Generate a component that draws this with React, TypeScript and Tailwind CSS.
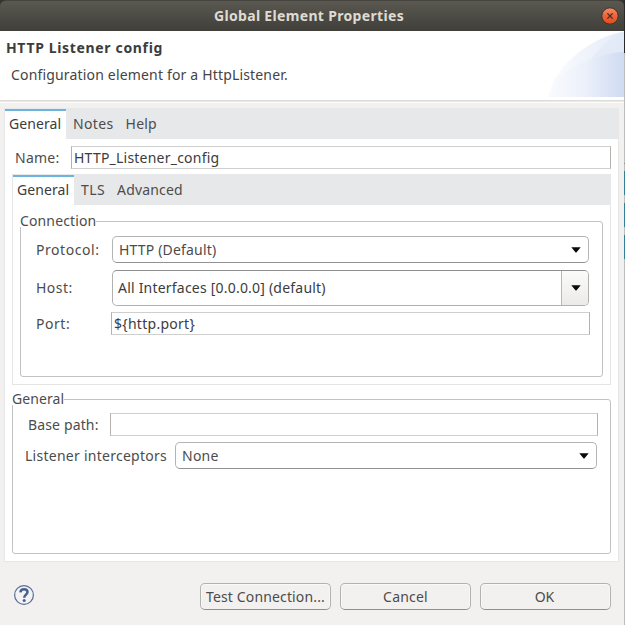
import type { ReactNode } from "react";

const Arrow = ({ className = "" }: { className?: string }) => (
  <svg width="10" height="6" viewBox="0 0 10 6" className={`shrink-0 ${className}`}>
    <path d="M0.3 0.3H9.7L5.6 5.2Q5 5.9 4.4 5.2Z" fill="#0a0a0a" />
  </svg>
);

const Label = ({ className = "", children }: { className?: string; children: ReactNode }) => (
  <span className={`block shrink-0 whitespace-pre text-[#4c4c4c] ${className}`}>{children}</span>
);

const Field = ({ className = "", children }: { className?: string; children?: ReactNode }) => (
  <div className={`flex h-[23px] items-center border border-[#cfcfcf] border-x-[#b5b2ae] bg-white pl-[2px] text-[#3c3c3c] ${className}`}>
    {children}
  </div>
);

const Combo = ({ className = "", children }: { className?: string; children: ReactNode }) => (
  <div className={`flex h-[27px] items-center justify-between rounded-[5px] border border-[#b4b4b4] border-b-[#929292] bg-white pr-[7px] pl-[6px] text-[#4c4c4c] ${className}`}>
    {children}
    <Arrow />
  </div>
);

const Group = ({ title, className = "", titleClass = "", children }: { title: string; className?: string; titleClass?: string; children: ReactNode }) => (
  <section className={`relative rounded-[3px] border border-[#c2c2c2] ${className}`}>
    <h3 className={`absolute -top-[10px] -left-px h-[15px] bg-white leading-[17px] text-[#4c4c4c] ${titleClass}`}>{title}</h3>
    {children}
  </section>
);

const TabBar = ({ first, children }: { first: string; children: ReactNode }) => (
  <div className="flex h-[31px] shrink-0 bg-[#e7e8ea] pt-px leading-[30px] text-[#4c4c4c]">
    <div className="w-[61px] border-t-2 border-[#6db4dc] bg-white pl-1 leading-[25px] tracking-[0.08px] text-[#3c3c3c]">{first}</div>
    {children}
  </div>
);

const Button = ({ children, className = "" }: { children: ReactNode; className?: string }) => (
  <button className={`flex h-[27px] w-[131px] items-center justify-center rounded-[5px] border border-[#b2b2b0] border-b-[#8f908e] bg-[#f2f1ef] text-[#4c4c4c] shadow-[inset_0_1px_0_#f9f9f8,inset_1px_0_0_#f7f7f6,inset_-1px_0_0_#f7f7f6] ${className}`}>
    {children}
  </button>
);

export default function App() {
  return (
    <div className="flex h-[625px] w-[625px] overflow-hidden bg-[#33322f] font-['Noto_Sans','Open_Sans',sans-serif] text-[14px] leading-[20px]">
      <div className="flex w-[624px] flex-col bg-[#f2f1ef]">
        <div className="bg-[#33322f]">
          <header className="relative h-[31px] rounded-t-[6px] border-t border-[#45443f] bg-gradient-to-b from-[#5a5850] to-[#403f3a] text-center leading-[29px] font-bold tracking-[0.33px] text-[#dfdbd2]">
            <span className="relative -left-[3px]">Global Element Properties</span>
            <svg className="absolute top-[6px] right-[5px]" width="18" height="18" viewBox="0 0 18 18">
              <defs>
                <linearGradient id="closeFill" x1="0" y1="0" x2="0" y2="1">
                  <stop offset="0" stopColor="#f58e68" />
                  <stop offset="0.5" stopColor="#ec6338" />
                  <stop offset="1" stopColor="#df4d1b" />
                </linearGradient>
              </defs>
              <circle cx="9" cy="9" r="8.2" fill="url(#closeFill)" stroke="#383630" strokeWidth="1" />
              <path d="M6.4 6.4L11.6 11.6M11.6 6.4L6.4 11.6" stroke="#40291f" strokeWidth="1.3" />
            </svg>
          </header>
        </div>

        <div className="flex h-[69px] justify-between bg-white">
          <div className="pt-[7px] pl-[6px] text-[#3c3c3c]">
            <h1 className="leading-[20px] font-bold tracking-[0.66px]">HTTP Listener config</h1>
            <p className="mt-[7px] pl-[5px] tracking-[0.17px] text-[#444]">Configuration element for a HttpListener.</p>
          </div>
          <svg width="76" height="66" viewBox="0 0 76 66">
            <defs>
              <linearGradient id="outer">
                <stop offset="0" stopColor="#fbfcfe" />
                <stop offset="1" stopColor="#e4ebf8" />
              </linearGradient>
              <linearGradient id="inner">
                <stop offset="0" stopColor="#fafbfe" />
                <stop offset="0.5" stopColor="#ebf0fa" />
                <stop offset="1" stopColor="#cfdbf2" />
              </linearGradient>
            </defs>
            <path d="M0 66C5 38 39 7 76 0.5V66Z" fill="url(#outer)" />
            <path d="M42 30C50 17 62 7 76 1V21C64 22 53 26 42 30Z" fill="#dde6f6" fillOpacity="0.45" />
            <path d="M0 66L7 48C28 34 50 22 76 21V66Z" fill="url(#inner)" />
          </svg>
        </div>
        <div className="h-[3px] shrink-0 border-t border-b border-t-[#dcdbd9] border-b-[#fbfbfa] bg-[#ebeae8]" />

        <main className="mt-[5px] ml-1 flex h-[454px] w-[615px] shrink-0 flex-col border-b border-l border-[#e4e6e8] bg-white">
          <TabBar first="General">
            <span className="ml-[7px] tracking-[0.36px]">Notes</span>
            <span className="ml-[12px] tracking-[0.21px]">Help</span>
          </TabBar>
          <div className="flex-1 border-r border-[#e4e6e8] pr-[7px] pl-[7px]">
            <div className="flex items-center pt-[7px]">
              <Label className="w-[59px] pl-[3px] tracking-[0.26px]">Name:</Label>
              <Field className="flex-1 tracking-[0.22px]">HTTP_Listener_config</Field>
            </div>

            <div className="mt-[5px] flex h-[211px] flex-col border-b border-l border-[#e5e5e5]">
              <TabBar first="General">
                <span className="ml-[7px] tracking-[0.4px]">TLS</span>
                <span className="ml-[12px] tracking-[0.17px]">Advanced</span>
              </TabBar>
              <div className="flex-1 border-r border-[#e5e5e5] px-[7px] pt-4">
                <Group title="Connection" titleClass="w-[76px] tracking-[0.13px]" className="h-[156px] pt-[14px] pr-[12px] pl-[15px]">
                  <div className="flex items-center pr-px">
                    <Label className="w-[76px] tracking-[0.55px]">Protocol:</Label>
                    <Combo className="flex-1 tracking-[0.18px]">HTTP (Default)</Combo>
                  </div>
                  <div className="mt-[7px] flex items-center pr-px">
                    <Label className="w-[76px] tracking-[0.47px]">Host:</Label>
                    <div className="flex h-9 flex-1 overflow-hidden rounded-[5px] border border-[#b0b0b0] border-t-[#8e8e8e] bg-white leading-[33px] tracking-[0.21px] text-[#3c3c3c]">
                      <span className="flex-1 pl-[5px]">{"All Interfaces [0.0.0.0] (default)"}</span>
                      <span className="flex w-[27px] items-center justify-center border-l border-[#b8b8b8] bg-gradient-to-b from-[#fbfbfb] to-[#ebeae8] pl-[2px]">
                        <Arrow />
                      </span>
                    </div>
                  </div>
                  <div className="mt-[6px] flex items-center">
                    <Label className="w-[75px] tracking-[0.55px]">Port:</Label>
                    <Field className="flex-1 tracking-[0.28px]">{"${http.port}"}</Field>
                  </div>
                </Group>
              </div>
            </div>

            <Group title="General" titleClass="w-[52px] tracking-[0.08px]" className="mt-[14px] h-[155px] pt-[13px] pr-[12px] pl-[12px]">
              <div className="flex items-center">
                <Label className="w-[85px] pl-[3px] tracking-[0.14px]">Base path:</Label>
                <Field className="flex-1" />
              </div>
              <div className="mt-[6px] flex items-center pr-px">
                <Label className="w-[150px] tracking-[0.26px]">Listener interceptors</Label>
                <Combo className="flex-1 tracking-[0.25px]">None</Combo>
              </div>
            </Group>
          </div>
        </main>

        <footer className="mt-[21px] flex items-center justify-between pr-[13px] pl-[13px]">
          <svg width="22" height="22" viewBox="0 0 22 22" className="-mt-[3px]">
            <circle cx="11" cy="11" r="9.4" fill="#f3f3f5" stroke="#5a6e95" strokeWidth="1.2" />
            <path d="M7.4 8.4C7.6 6.2 9 5.2 11 5.2C13.2 5.2 14.5 6.4 14.5 8.1C14.5 10.6 11.2 10.8 11.2 13.8" fill="none" stroke="#4a608c" strokeWidth="2.5" />
            <circle cx="11.2" cy="16.5" r="1.5" fill="#4a608c" />
          </svg>
          <div className="flex gap-[9px]">
            <Button className="tracking-[0.14px]">Test Connection...</Button>
            <Button className="tracking-[0.21px]">Cancel</Button>
            <Button className="pr-[2px]">OK</Button>
          </div>
        </footer>
      </div>

      <div className="flex w-px flex-col gap-2 bg-[#bdbcbb]">
        <div className="h-[53px] bg-[#2b2a28]" />
        <div className="mt-[102px] h-px shrink-0 -mb-px bg-[#8a8a8a]" />
        <div className="h-6 bg-[#33809a]" />
        <div className="h-6 bg-[#33809a]" />
        <div className="h-6 bg-[#33809a]" />
      </div>
    </div>
  );
}
